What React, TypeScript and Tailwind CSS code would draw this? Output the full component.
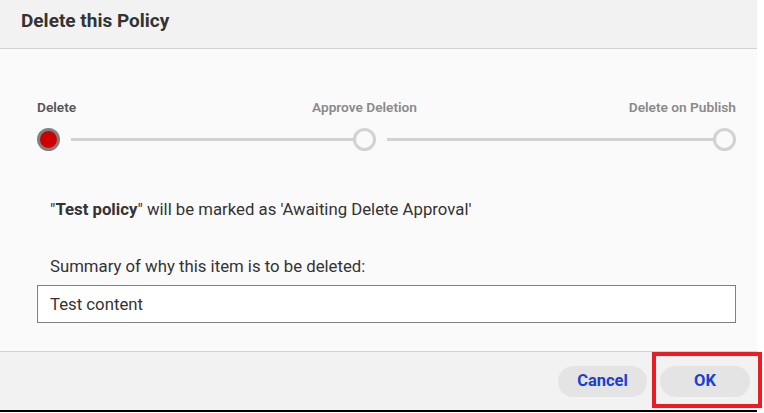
import React from "react";

function StepDot({ active }: { active?: boolean }) {
  return active ? (
    <span className="h-[23px] w-[23px] flex-shrink-0 rounded-full border-[3px] border-[#808080] bg-[#cc0000]" />
  ) : (
    <span className="h-[23px] w-[23px] flex-shrink-0 rounded-full border-[3px] border-[#d2d2d2] bg-[#fafafa]" />
  );
}

export default function App() {
  return (
    <div className="relative w-[764px] h-[413px] bg-white font-['Roboto',sans-serif]">
      <div className="w-[757px] flex flex-col">
        <div className="h-[49px] flex items-center border-b border-[#d4d4d4] bg-[#f2f2f2] px-[21px]">
          <h1 className="text-[19px] font-bold text-[#333] leading-none pb-[7px]">Delete this Policy</h1>
        </div>

        <div className="h-[303px] border-b border-[#d4d4d4] bg-[#fafafa] pt-[50px] pl-[37px] pr-[21px]">
          <div className="flex h-[16px] items-center text-[13.7px] font-semibold leading-4">
            <span className="w-[316px] text-[#555]">Delete</span>
            <span className="flex w-[23px] justify-center whitespace-nowrap text-[#8a8a8a]">Approve Deletion</span>
            <span className="flex-1 text-right text-[#8a8a8a]">Delete on Publish</span>
          </div>

          <div className="mt-[13px] flex items-center">
            <StepDot active />
            <span className="ml-[11px] h-[3px] w-[282px] bg-[#d2d2d2]" />
            <StepDot />
            <span className="ml-[11px] h-[3px] flex-1 bg-[#d2d2d2]" />
            <StepDot />
          </div>

          <p className="mt-[46px] pl-[13px] text-[16.75px] leading-6 text-[#333]">
            "<span className="font-bold">Test policy</span>" will be marked as 'Awaiting Delete Approval'
          </p>

          <p className="mt-[33px] pl-[13px] text-[16.75px] leading-6 text-[#333]">
            Summary of why this item is to be deleted:
          </p>

          <input
            readOnly
            value="Test content"
            className="mt-[7px] h-[38px] w-full border border-[#808080] bg-white px-[12px] text-[16.75px] text-[#333] outline-none"
          />
        </div>

        <div className="h-[60px] flex items-center justify-end gap-[13px] border-b-2 border-black bg-[#f2f2f2] pr-[7px]">
          <button className="h-[31px] w-[89px] rounded-full bg-[#e4e4e4] text-[16.5px] font-bold text-[#1a3fd6]">
            Cancel
          </button>
          <button className="h-[31px] w-[90px] rounded-full bg-[#e4e4e4] text-[16.5px] font-bold text-[#1a3fd6]">
            OK
          </button>
        </div>
      </div>

      <div className="pointer-events-none absolute left-[652px] top-[352px] h-[56px] w-[110px] border-[4px] border-[#ed1c24]" />
    </div>
  );
}
